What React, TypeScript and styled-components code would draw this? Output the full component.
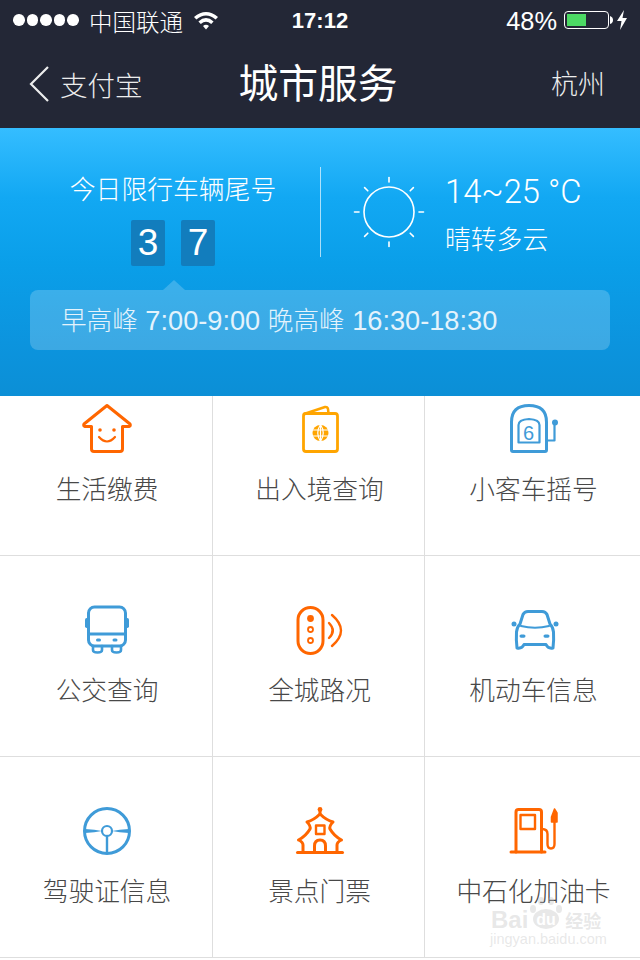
import React from 'react'
import styled, { createGlobalStyle } from 'styled-components'

const GlobalStyle = createGlobalStyle`
  html, body {
    margin: 0;
    padding: 0;
    background: #fff;
    font-family: "Liberation Sans", "Noto Sans CJK SC", sans-serif;
  }
  * { box-sizing: border-box; }
`

const cjk = `"Noto Sans CJK SC", "Liberation Sans", sans-serif`
const latin = `"Liberation Sans", "Noto Sans CJK SC", sans-serif`

const Page = styled.div`
  position: relative;
  width: 640px;
  height: 960px;
  overflow: hidden;
  background: #fff;
`

const Header = styled.header`
  background: #232736;
  color: #fff;
`

const StatusBar = styled.div`
  display: grid;
  grid-template-columns: 1fr auto 1fr;
  align-items: center;
  height: 40px;
  padding: 0 12px 0 13px;
`

const StatusLeft = styled.div`
  display: flex;
  align-items: center;
`

const StatusRight = styled.div`
  display: flex;
  align-items: center;
  justify-content: flex-end;
`

const Signal = styled.div`
  display: flex;
  gap: 2px;
  margin-right: 10px;
`

const Dot = styled.span`
  width: 11.6px;
  height: 11.6px;
  border-radius: 50%;
  background: #fff;
`

const Carrier = styled.span`
  font: 300 23.5px/28px ${cjk};
  margin: 1px 10px 0 0;
`

const Clock = styled.span`
  font: 700 22px/28px ${latin};
  margin: 1px 0 0 -1px;
`

const Percent = styled.span`
  font: 400 25.4px/28px ${latin};
  margin: 1px 7px 0 0;
`

const Battery = styled.div`
  width: 45px;
  height: 18px;
  padding: 2px;
  border: 1px solid #fff;
  border-radius: 4px;
  margin-right: 1px;
`

const BatteryFill = styled.div`
  width: 19px;
  height: 100%;
  background: #4cd964;
`

const ChargeBolt = styled.svg`
  margin-left: 2px;
`

const Nav = styled.nav`
  display: grid;
  grid-template-columns: 1fr auto 1fr;
  align-items: center;
  height: 88px;
  padding: 0 34px 4px 29px;
`

const BackLink = styled.div`
  display: flex;
  align-items: center;
  gap: 11px;
  font: 300 27.5px/40px ${cjk};
  color: #eceded;
  margin-top: 3px;
`

const Title = styled.h1`
  margin: 0 0 2px 1px;
  font: 400 39.8px/50px ${cjk};
  color: #fff;
`

const City = styled.div`
  justify-self: end;
  font: 300 27px/40px ${cjk};
  color: #eceded;
  margin: 2px 1px 0 0;
`

const Hero = styled.section`
  height: 268px;
  padding-top: 39px;
  background: linear-gradient(180deg, #35bdff 0%, #12a8f3 26%, #0a9fe9 50%, #0c94de 80%, #0c8fd6 100%);
  color: #fff;
`

const HeroRow = styled.div`
  display: flex;
  align-items: flex-start;
`

const PlatePanel = styled.div`
  width: 320px;
  padding: 4px 0 0 26px;
  display: flex;
  flex-direction: column;
  align-items: center;
`

const PlateLabel = styled.div`
  font: 300 25.8px/34px ${cjk};
`

const Digits = styled.div`
  display: flex;
  gap: 16px;
  margin-top: 15px;
`

const Digit = styled.div`
  width: 34px;
  height: 46px;
  border-radius: 2px;
  background: #127dbd;
  font: 400 37px/46px ${latin};
  text-align: center;
`

const Divider = styled.div`
  width: 1px;
  height: 90px;
  background: rgba(255, 255, 255, 0.65);
`

const WeatherPanel = styled.div`
  display: flex;
  align-items: flex-start;
  padding: 8px 0 0 31px;
`

const SunIcon = styled.svg`
  display: block;
  width: 74px;
  height: 74px;
`

const WeatherText = styled.div`
  margin-left: 19px;
`

const Temperature = styled.div`
  font: 300 32.7px/34px Roboto, ${latin};
`

const Condition = styled.div`
  margin-top: 11px;
  font: 300 25.8px/36px ${cjk};
`

const PeakBar = styled.div`
  position: relative;
  margin: 24px 30px 0;
  height: 60px;
  padding-left: 31px;
  border-radius: 8px;
  background: rgba(255, 255, 255, 0.2);
  color: #e4f3fc;
  font: 400 27.2px/58px ${latin};

  &::before {
    content: '';
    position: absolute;
    left: 133px;
    top: -10px;
    border-left: 11px solid transparent;
    border-right: 11px solid transparent;
    border-bottom: 10px solid rgba(255, 255, 255, 0.2);
  }
`

const PeakWord = styled.span`
  font: 300 25.6px/58px ${cjk};
`

const ServiceGrid = styled.main`
  display: grid;
  grid-template-columns: 213px 212px 215px;
  grid-template-rows: 160px 201px 201px;
`

const Cell = styled.div<{ $last: boolean }>`
  display: flex;
  flex-direction: column;
  align-items: center;
  justify-content: flex-end;
  padding: 0 0 50px 2px;
  border-bottom: 1px solid #dedede;
  border-right: ${(p) => (p.$last ? 'none' : '1px solid #dedede')};
`

const IconBox = styled.svg`
  display: block;
  width: 70px;
  height: 60px;
  margin-bottom: 11px;
  fill: none;
  stroke-width: 3;
  stroke-linecap: round;
  stroke-linejoin: round;
`

const Label = styled.div`
  font: 300 25.7px/34px ${cjk};
  color: #484848;
  white-space: nowrap;
`

const Watermark = styled.div`
  position: absolute;
  left: 491px;
  top: 909px;
  width: 122px;
  color: rgba(190, 190, 190, 0.36);
  pointer-events: none;
`

const WatermarkLogo = styled.div`
  display: flex;
  align-items: flex-end;
  height: 21px;
  font: 700 24px/20px ${latin};
`

const WatermarkPaw = styled.svg`
  flex: none;
`

const WatermarkCn = styled.span`
  font: 700 18px/20px ${cjk};
  margin-left: 1px;
`

const WatermarkUrl = styled.div`
  font: 400 14.5px/18px ${latin};
  margin: 0 0 0 -1px;
`

const ORANGE = '#ff6600'
const AMBER = '#ffa500'
const BLUE = '#3f9bd8'

// Icon drawings keep the page coordinates measured from the screenshot, hence the offset viewBoxes
const House = () => (
  <IconBox viewBox="72 400 70 60" stroke={ORANGE}>
    <path d="M107 405.5 L130 424 Q131 426 129 426.5 L122.5 426.5 L122.5 449 Q122.5 451.5 120 451.5 L94 451.5 Q91.5 451.5 91.5 449 L91.5 426.5 L85 426.5 Q83 426 84 424 Z" />
    <circle cx="100" cy="430" r="1.8" fill={ORANGE} stroke="none" />
    <circle cx="114" cy="430" r="1.8" fill={ORANGE} stroke="none" />
    <path d="M99 437 Q107 446 115 437" strokeWidth="2.2" />
  </IconBox>
)

const Passport = () => (
  <IconBox viewBox="285 400 70 60" stroke={AMBER}>
    <path d="M304 414 L325 407 Q327.5 406.5 328 409 L328.5 413.5" strokeWidth="2.5" />
    <rect x="303.5" y="413.5" width="34" height="38" rx="2.5" strokeWidth="2.8" />
    <circle cx="320.5" cy="433" r="8" fill={AMBER} stroke="none" />
    <path d="M312 430 H329 M312 436 H329 M320.5 424.5 V441.5" stroke="#fff" strokeWidth="1.2" />
    <path d="M320.5 424.5 Q315 433 320.5 441.5 M320.5 424.5 Q326 433 320.5 441.5" stroke="#fff" strokeWidth="1.2" />
  </IconBox>
)

const Slot = () => (
  <IconBox viewBox="498 400 70 60" stroke={BLUE}>
    <path d="M510.5 450 V422 Q510.5 405.5 528 405.5 Q545.5 405.5 545.5 422 V450 Q545.5 451.5 544 451.5 H512 Q510.5 451.5 510.5 450 Z" />
    <path d="M517.5 442.5 V425 Q517.5 419.5 528 419 Q538.5 419.5 538.5 425 V442.5 Z" strokeWidth="2.2" />
    <text x="527.5" y="440" textAnchor="middle" fontFamily={latin} fontSize="20" fill={BLUE} stroke="none">6</text>
    <path d="M546 440.5 H553.5 V424" strokeWidth="2.2" />
    <circle cx="554" cy="422.5" r="3" fill={BLUE} stroke="none" />
  </IconBox>
)

const Bus = () => (
  <IconBox viewBox="72 601 70 60" stroke={BLUE}>
    <rect x="88.5" y="607" width="37" height="39" rx="6" />
    <path d="M88.5 634 H125.5" />
    <path d="M93 646 V650 Q93 652.5 97.5 652.5 Q102 652.5 102 650 V646 M112 646 V650 Q112 652.5 116.5 652.5 Q121 652.5 121 650 V646" strokeWidth="2.6" />
    <rect x="85" y="618" width="3.5" height="10" rx="1.7" fill={BLUE} stroke="none" />
    <rect x="125.5" y="618" width="3.5" height="10" rx="1.7" fill={BLUE} stroke="none" />
    <rect x="96" y="638.5" width="5" height="3" rx="1.5" fill={BLUE} stroke="none" />
    <rect x="112.5" y="638.5" width="5" height="3" rx="1.5" fill={BLUE} stroke="none" />
  </IconBox>
)

const TrafficLight = () => (
  <IconBox viewBox="285 601 70 60" stroke={ORANGE}>
    <rect x="298" y="607.5" width="25" height="46" rx="12.5" />
    <circle cx="310.5" cy="618.5" r="3.4" fill={ORANGE} stroke="none" />
    <circle cx="310.5" cy="629.5" r="2.5" strokeWidth="1.8" />
    <circle cx="310.5" cy="640.5" r="2.5" strokeWidth="1.8" />
    <path d="M329 623 Q336.5 630.5 329 638" strokeWidth="2.4" />
    <path d="M332 615 Q350 630.5 332 646" strokeWidth="2.4" />
  </IconBox>
)

const Car = () => (
  <IconBox viewBox="498 601 70 60" stroke={BLUE}>
    <path d="M516 648 Q515 640 515.5 632 Q516 627 519 624 L522 614.5 Q523.5 611.5 527 611.5 H541 Q544.5 611.5 546 614.5 L549 624 Q552 627 552.5 632 Q553 640 552 648 Q547 649 545 644.5 H523 Q521 649 516 648 Z" />
    <path d="M520 626 Q534 629.5 548 626" strokeWidth="2.2" />
    <rect x="510.5" y="621.5" width="5" height="5" rx="2.5" fill={BLUE} stroke="none" />
    <rect x="552.5" y="621.5" width="5" height="5" rx="2.5" fill={BLUE} stroke="none" />
    <rect x="518.5" y="634.5" width="6" height="3.2" rx="1.6" fill={BLUE} stroke="none" />
    <rect x="542.5" y="634.5" width="6" height="3.2" rx="1.6" fill={BLUE} stroke="none" />
  </IconBox>
)

const SteeringWheel = () => (
  <IconBox viewBox="72 802 70 60" stroke={BLUE}>
    <circle cx="107" cy="831" r="22.5" />
    <circle cx="107" cy="831" r="5" strokeWidth="2.2" />
    <path d="M85 829 Q95 829.5 102 831 Q95 832.5 85 833 Z" fill={BLUE} stroke="none" />
    <path d="M129 829 Q119 829.5 112 831 Q119 832.5 129 833 Z" fill={BLUE} stroke="none" />
    <path d="M107 836 V853" strokeWidth="2.4" />
  </IconBox>
)

const Temple = () => (
  <IconBox viewBox="285 802 70 60" stroke={ORANGE} strokeWidth="2.8">
    <circle cx="320" cy="809.5" r="2.4" fill={ORANGE} stroke="none" />
    <path d="M320 811 V814 Q314 820 307 822 Q311 826 310 829 Q306 836 298.5 840 Q303 842 303 845 V852" />
    <path d="M320 814 Q326 820 333 822 Q329 826 330 829 Q334 836 341.5 840 Q337 842 337 845 V852" />
    <path d="M297.5 852.5 H342.5" />
    <rect x="316" y="825.5" width="8.5" height="8.5" strokeWidth="2.4" />
    <path d="M314.5 852 V846 Q314.5 840 320 840 Q325.5 840 325.5 846 V852" />
  </IconBox>
)

const FuelPump = () => (
  <IconBox viewBox="498 802 70 60" stroke={ORANGE} strokeWidth="2.8">
    <path d="M515 852 V812 Q515 809.5 517.5 809.5 H538 Q540.5 809.5 540.5 812 V852" />
    <path d="M510 852 H544" />
    <rect x="519.5" y="815" width="14.5" height="14" strokeWidth="2.4" />
    <path d="M541 829 Q546.5 829 546.5 834 V844 Q546.5 848.5 550 848.5 Q553.5 848.5 553.5 844 V822" strokeWidth="2.4" />
    <path d="M553.5 809 L550.5 817 V822 H556 V813 Z" fill={ORANGE} strokeWidth="1.5" />
  </IconBox>
)

const services = [
  { label: '生活缴费', icon: <House /> },
  { label: '出入境查询', icon: <Passport /> },
  { label: '小客车摇号', icon: <Slot /> },
  { label: '公交查询', icon: <Bus /> },
  { label: '全城路况', icon: <TrafficLight /> },
  { label: '机动车信息', icon: <Car /> },
  { label: '驾驶证信息', icon: <SteeringWheel /> },
  { label: '景点门票', icon: <Temple /> },
  { label: '中石化加油卡', icon: <FuelPump /> },
]

const rays = [0, 45, 90, 135, 180, 225, 270, 315]

export default function App() {
  return (
    <Page>
      <GlobalStyle />
      <Header>
        <StatusBar>
          <StatusLeft>
            <Signal>
              {[0, 1, 2, 3, 4].map((i) => (
                <Dot key={i} />
              ))}
            </Signal>
            <Carrier>中国联通</Carrier>
            <svg width="26" height="20" viewBox="0 0 26 20">
              <path d="M1 7 Q13 -3 25 7 L22.6 9.6 Q13 1.6 3.4 9.6 Z" fill="#fff" />
              <path d="M5.4 11.4 Q13 4.6 20.6 11.4 L18.2 14 Q13 9.6 7.8 14 Z" fill="#fff" />
              <path d="M10 16 Q13 13.4 16 16 L13 19.4 Z" fill="#fff" />
            </svg>
          </StatusLeft>
          <Clock>17:12</Clock>
          <StatusRight>
            <Percent>48%</Percent>
            <Battery>
              <BatteryFill />
            </Battery>
            <svg width="4" height="8" viewBox="0 0 4 8">
              <path d="M0 0 Q3 1 3 4 Q3 7 0 8 Z" fill="#fff" />
            </svg>
            <ChargeBolt width="12" height="20" viewBox="0 0 12 20">
              <path d="M8 0 L1 11 H5.5 L4 20 L11 8 H6.5 Z" fill="#fff" />
            </ChargeBolt>
          </StatusRight>
        </StatusBar>
        <Nav>
          <BackLink>
            <svg width="20" height="36" viewBox="0 0 20 36">
              <path d="M19 1 L2 18 L19 35" fill="none" stroke="#eceded" strokeWidth="2.2" />
            </svg>
            支付宝
          </BackLink>
          <Title>城市服务</Title>
          <City>杭州</City>
        </Nav>
      </Header>

      <Hero>
        <HeroRow>
          <PlatePanel>
            <PlateLabel>今日限行车辆尾号</PlateLabel>
            <Digits>
              <Digit>3</Digit>
              <Digit>7</Digit>
            </Digits>
          </PlatePanel>
          <Divider />
          <WeatherPanel>
            <SunIcon viewBox="0 0 74 74" fill="none" stroke="#fff" strokeWidth="1.6" strokeLinecap="round">
              <circle cx="37" cy="37" r="25" />
              {rays.map((deg) => (
                <path key={deg} d="M37 2.5 V7" transform={`rotate(${deg} 37 37)`} />
              ))}
            </SunIcon>
            <WeatherText>
              <Temperature>14~25 °C</Temperature>
              <Condition>晴转多云</Condition>
            </WeatherText>
          </WeatherPanel>
        </HeroRow>
        <PeakBar>
          <PeakWord>早高峰</PeakWord> 7:00-9:00 <PeakWord>晚高峰</PeakWord> 16:30-18:30
        </PeakBar>
      </Hero>

      <ServiceGrid>
        {services.map((s, i) => (
          <Cell key={s.label} $last={i % 3 === 2}>
            {s.icon}
            <Label>{s.label}</Label>
          </Cell>
        ))}
      </ServiceGrid>

      <Watermark>
        <WatermarkLogo>
          Bai
          <WatermarkPaw width="36" height="36" viewBox="0 0 36 36" fill="currentColor">
            <ellipse cx="18" cy="25" rx="13" ry="10" />
            <ellipse cx="5" cy="15" rx="3" ry="4" />
            <ellipse cx="13" cy="7" rx="3" ry="4" />
            <ellipse cx="23" cy="7" rx="3" ry="4" />
            <ellipse cx="31" cy="15" rx="3" ry="4" />
            <text x="18" y="31" textAnchor="middle" fontFamily={latin} fontSize="16" fontWeight="700" fill="#fff">du</text>
          </WatermarkPaw>
          <WatermarkCn>经验</WatermarkCn>
        </WatermarkLogo>
        <WatermarkUrl>jingyan.baidu.com</WatermarkUrl>
      </Watermark>
    </Page>
  )
}
